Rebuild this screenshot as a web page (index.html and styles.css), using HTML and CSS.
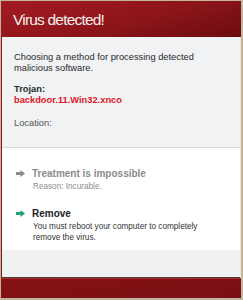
FILE: index.html
```html
<!DOCTYPE html>
<html>
<head>
<meta charset="utf-8">
<link rel="stylesheet" href="styles.css">
</head>
<body>
<div class="window">
  <div class="header"><h1 class="title">Virus detected!</h1></div>
  <div class="content">
    <div class="info">
      <p class="lead">Choosing a method for processing detected malicious software.</p>
      <div class="threat-label">Trojan:</div>
      <div class="threat-name">backdoor.11.Win32.xnco</div>
      <div class="location">Location:</div>
    </div>
    <div class="options">
      <div class="option disabled">
        <svg class="arrow" width="9" height="7" viewBox="0 0 9 7"><polygon points="0,2 4.5,2 4.5,0 9,3.5 4.5,7 4.5,5 0,5" fill="#8a8a8a"/></svg>
        <div class="option-body">
          <div class="option-title">Treatment is impossible</div>
          <div class="option-desc">Reason: Incurable.</div>
        </div>
      </div>
      <div class="option">
        <svg class="arrow" width="9" height="7" viewBox="0 0 9 7"><polygon points="0,2 4.5,2 4.5,0 9,3.5 4.5,7 4.5,5 0,5" fill="#1fa572"/></svg>
        <div class="option-body">
          <div class="option-title">Remove</div>
          <div class="option-desc">You must reboot your computer to completely remove the virus.</div>
        </div>
      </div>
    </div>
    <div class="spacer"></div>
  </div>
  <div class="footer"></div>
</div>
</body>
</html>
```
FILE: styles.css
```css
html, body {
  margin: 0;
  padding: 0;
  background: #c2b49d;
}
body {
  width: 243px;
  height: 300px;
  overflow: hidden;
  font-family: "Liberation Sans", Arial, sans-serif;
}
.window {
  margin: 1px 2px 2px 1px;
  height: 297px;
  display: flex;
  flex-direction: column;
  background: linear-gradient(170deg, #a61b21 0%, #901519 60%, #7a0f13 100%);
}
.header {
  height: 36px;
  box-sizing: border-box;
  flex: none;
  display: flex;
  align-items: center;
  padding: 2px 0 0 12px;
  background: linear-gradient(165deg, #a31b21 0%, #8c151a 55%, #6c0c10 100%);
}
.title {
  margin: 0;
  color: #f6eeee;
  font-weight: normal;
  font-size: 15.5px;
  letter-spacing: -0.8px;
}
.content {
  margin-left: 1px;
  border-right: 1px solid #ece4e0;
  display: flex;
  flex-direction: column;
  flex: none;
}
.info {
  background: #f0f2f4;
  padding: 15px 12px 0 12px;
  height: 111px;
  box-sizing: border-box;
  border-bottom: 1px solid #d8d8d8;
  font-size: 9.3px;
}
.lead {
  margin: 0 0 10px 0;
  color: #2a2a2a;
  line-height: 11px;
}
.threat-label {
  font-weight: bold;
  color: #1c2c2c;
  line-height: 11px;
}
.threat-name {
  font-weight: bold;
  color: #e0161f;
  line-height: 11px;
  margin-bottom: 12px;
}
.location {
  color: #555;
  line-height: 11px;
}
.options {
  background: #ffffff;
  height: 102px;
  padding-top: 20px;
  box-sizing: border-box;
}
.option {
  display: flex;
  gap: 7px;
  padding-left: 14px;
  margin-bottom: 16px;
}
.arrow {
  margin-top: 2px;
  flex: none;
}
.option-title {
  font-size: 10px;
  font-weight: bold;
  color: #222;
  line-height: 12px;
}
.option-desc {
  font-size: 8.2px;
  color: #333;
  line-height: 11px;
  margin-top: 1px;
  padding-left: 1px;
  width: 168px;
}
.disabled .option-title { color: #8c8c8c; }
.disabled .option-desc { color: #8c8c8c; }
.spacer {
  background: #f0f1f3;
  height: 27px;
  border-bottom: 1px solid #4e3a32;
}
.footer {
  flex: 1;
  border-top: 1px solid #b02a2e;
}
```
